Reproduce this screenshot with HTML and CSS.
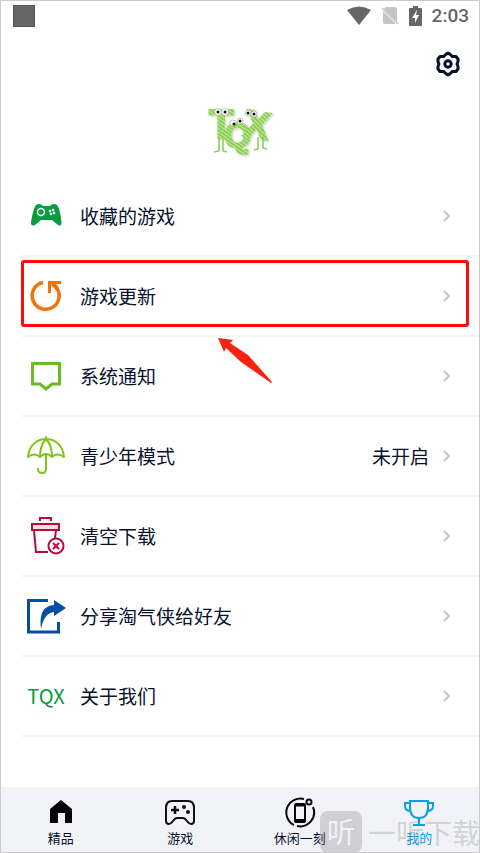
FILE: index.html
```html
<!DOCTYPE html>
<html lang="zh-CN">

<head>
    <meta charset="UTF-8">
    <meta name="viewport" content="width=device-width, initial-scale=1.0">
    <title>我的</title>
    <link rel="stylesheet" href="styles.css">
</head>

<body>

    <div class="app">
        <div class="status-bar">
            <span class="status-square"></span>
            <div class="status-icons">
                <svg width="24" height="20" viewBox="0 0 24 20">
                    <path d="M0 4Q12-3 24 4L12 19Z" fill="#666" />
                </svg>
                <svg width="18" height="20" viewBox="0 0 18 20">
                    <path d="M5 1H14Q16 1 16 3V16L3 3ZM2 5L15 18H4Q2 18 2 16Z" fill="#c4c4c4" />
                    <path d="M1 2L17 18" stroke="#c4c4c4" stroke-width="1.5" />
                </svg>
                <svg width="13" height="20" viewBox="0 0 13 20">
                    <path d="M4 0H9V2H12Q13 2 13 3V19Q13 20 12 20H1Q0 20 0 19V3Q0 2 1 2H4Z" fill="#666" />
                    <path d="M8 4L3 12H6V17L10 9H7Z" fill="#fff" />
                </svg>
                <span class="time">2:03</span>
            </div>
        </div>

        <header class="header">
            <button class="settings" type="button" aria-label="设置">
                <svg width="26" height="26" viewBox="0 0 26 26" fill="none" stroke="#07112c" stroke-linejoin="round">
                    <path d="M10 4L13 2L16 4L17 5.500H21L23 8V10.500L22 13L23 15.500V18L21 20.500H17L16 22L13 24L10 22L9 20.500H5L3 18V15.500L4 13L3 10.500V8L5 5.500H9Z" stroke-width="3" />
                    <circle cx="13" cy="13" r="3.2" stroke-width="3" />
                </svg>
            </button>
            <svg class="logo" width="72" height="54" viewBox="14 12 72 54" role="img" aria-label="TQX">
                <defs>
                    <pattern id="hatch" width="3" height="3" patternUnits="userSpaceOnUse" patternTransform="rotate(-55)">
                        <rect width="3" height="3" fill="#8fce55" />
                        <rect width="1" height="3" fill="#c3e7a3" />
                    </pattern>
                    <filter id="shadow">
                        <feDropShadow dx="1" dy="1" stdDeviation="1" flood-opacity="0.2" />
                    </filter>
                </defs>
                <g class="logo-letters" filter="url(#shadow)">
                    <text x="19" y="47" font-size="40">T</text>
                    <text x="34" y="56" font-size="35">Q</text>
                    <text x="55" y="47" font-size="38" transform="rotate(10 68 32)">X</text>
                </g>
                <path d="M29 48V60L24 61M33 48V60L37 61M68 46V58L64 59M73 46V57L77 58" fill="none" stroke="#8dca57" stroke-width="1.5" />
                <g fill="#fff" stroke="#77a553" stroke-width="0.5">
                    <circle cx="28" cy="21" r="3.5" />
                    <circle cx="35" cy="21" r="3.5" />
                    <circle cx="43" cy="32" r="3" />
                    <circle cx="50" cy="30" r="3" />
                    <circle cx="58" cy="22" r="3" />
                    <circle cx="64" cy="23" r="3" />
                </g>
                <g fill="#111">
                    <circle cx="28" cy="21" r="1.5" />
                    <circle cx="35" cy="21" r="1.5" />
                    <circle cx="44" cy="33" r="1.5" />
                    <circle cx="50" cy="30" r="1.5" />
                    <circle cx="58" cy="22" r="1.5" />
                    <circle cx="64" cy="23" r="1.5" />
                </g>
            </svg>
        </header>

        <main class="menu">
            <a class="row" href="#">
                <span class="row-icon">
                    <svg width="40" height="40" viewBox="0 0 40 40">
                        <path d="M10 9Q13 7 16 9L17 10H24L25 9Q28 7 31 9Q34 13 35.500 26Q35.500 31 32 29L26 24H15L9 29Q5 31 5 26Q7 13 10 9Z" fill="#079c3e" />
                        <circle cx="15" cy="16" r="3.5" fill="none" stroke="#fff" stroke-width="1.5" />
                        <g fill="#fff">
                            <circle cx="24" cy="15" r="1.3" />
                            <circle cx="27" cy="14" r="1.3" />
                            <circle cx="25" cy="18" r="1.3" />
                            <circle cx="28" cy="17" r="1.3" />
                        </g>
                    </svg>
                </span>
                <span class="row-title">收藏的游戏</span>
                <svg class="arrow" width="8" height="12" viewBox="0 0 8 12"><path d="M1 1L6 6L1 11" /></svg>
            </a>
            <a class="row highlight" href="#">
                <span class="row-icon">
                    <svg width="40" height="40" viewBox="0 0 40 40">
                        <path d="M17 6.500A13.500 13.500 0 1 0 29 10" fill="none" stroke="#f0730b" stroke-width="3.5" />
                        <path d="M22 5H35V8H30L33 12L30 14L25 9V17H22Z" fill="#f0730b" />
                    </svg>
                </span>
                <span class="row-title">游戏更新</span>
                <svg class="arrow" width="8" height="12" viewBox="0 0 8 12"><path d="M1 1L6 6L1 11" /></svg>
                <svg class="pointer" width="56" height="48" viewBox="0 0 56 48">
                    <path d="M0 1L15 3L12 6L30 18L54 45L53 46L23 25L8 11L6 15Z" fill="#f9220f" />
                </svg>
            </a>
            <a class="row" href="#">
                <span class="row-icon">
                    <svg width="40" height="40" viewBox="0 0 40 40" fill="none" stroke="#67bd24" stroke-width="3">
                        <path d="M6.500 7.500H33.500V28H26L20 33L14 28H6.500Z" />
                    </svg>
                </span>
                <span class="row-title">系统通知</span>
                <svg class="arrow" width="8" height="12" viewBox="0 0 8 12"><path d="M1 1L6 6L1 11" /></svg>
            </a>
            <a class="row" href="#">
                <span class="row-icon">
                    <svg width="40" height="40" viewBox="0 0 40 40" fill="none" stroke="#82c31a" stroke-width="2" stroke-linecap="round" stroke-linejoin="round">
                        <path d="M20 1V3M2 21C3 10 10 3 20 3S37 10 38 21Q31 16 26 21Q20 15 14 21Q9 16 2 21ZM14 21Q14 9 20 3Q26 9 26 21M20 18V33Q20 37 16 37Q12 37 12 33" />
                    </svg>
                </span>
                <span class="row-title">青少年模式</span>
                <span class="row-value">未开启</span>
                <svg class="arrow" width="8" height="12" viewBox="0 0 8 12"><path d="M1 1L6 6L1 11" /></svg>
            </a>
            <a class="row" href="#">
                <span class="row-icon">
                    <svg width="40" height="40" viewBox="0 0 40 40" fill="none" stroke="#b9093a" stroke-width="2">
                        <path d="M14 5V2H25V5" />
                        <path d="M6 8H33V14H6Z" fill="#f5dede" />
                        <path d="M8 14L10 36H22M30 14L29 22" />
                        <circle cx="30" cy="30" r="7.500" />
                        <path d="M27 27L33 33M33 27L27 33" />
                    </svg>
                </span>
                <span class="row-title">清空下载</span>
                <svg class="arrow" width="8" height="12" viewBox="0 0 8 12"><path d="M1 1L6 6L1 11" /></svg>
            </a>
            <a class="row" href="#">
                <span class="row-icon">
                    <svg width="40" height="40" viewBox="0 0 40 40">
                        <path d="M22 4.500H2.500V36H32.500V26" fill="none" stroke="#064ea2" stroke-width="3" />
                        <path d="M28 4L40 12L28 20V16Q18 17 15 33Q12 10 28 9Z" fill="#064ea2" />
                    </svg>
                </span>
                <span class="row-title">分享淘气侠给好友</span>
                <svg class="arrow" width="8" height="12" viewBox="0 0 8 12"><path d="M1 1L6 6L1 11" /></svg>
            </a>
            <a class="row" href="#">
                <span class="row-icon row-icon-text">TQX</span>
                <span class="row-title">关于我们</span>
                <svg class="arrow" width="8" height="12" viewBox="0 0 8 12"><path d="M1 1L6 6L1 11" /></svg>
            </a>
        </main>

        <nav class="tabs">
            <a class="tab" href="#">
                <svg width="32" height="32" viewBox="0 0 32 32">
                    <path d="M16 4L27 13V27H20V17H13V27H5V13Z" fill="#000" />
                </svg>
                <span>精品</span>
            </a>
            <a class="tab" href="#">
                <svg width="32" height="32" viewBox="0 0 32 32" fill="none" stroke="#111" stroke-width="2">
                    <path d="M8 5H24Q30 5 30 12V25Q30 28 27 28Q25 28 23 25Q21 22 19 22H13Q11 22 9 25Q7 28 5 28Q2 28 2 25V12Q2 5 8 5Z" />
                    <path d="M7 14H15M11 10V18" stroke-width="2.5" />
                    <circle cx="20" cy="11" r="1" />
                    <circle cx="24" cy="16" r="1" />
                </svg>
                <span>游戏</span>
            </a>
            <a class="tab" href="#">
                <svg width="32" height="32" viewBox="0 0 32 32" fill="none" stroke="#080808" stroke-width="2">
                    <path d="M20 3A14 14 0 0 0 10 29M13 30A14 14 0 0 0 29 11" />
                    <circle cx="25" cy="6" r="2.500" />
                    <rect x="11" y="8" width="10" height="18" rx="1" />
                    <path d="M11 9.500H21M11 24H21" />
                </svg>
                <span>休闲一刻</span>
            </a>
            <a class="tab active" href="#">
                <svg width="32" height="32" viewBox="0 0 32 32" fill="none" stroke="#079fe7" stroke-width="2">
                    <path d="M7 5H25V11Q25 22 16 22Q7 22 7 11ZM7 7H2V10Q2 15 8 15M25 7H30V10Q30 15 24 15M16 22V28M10 29H22" />
                </svg>
                <span>我的</span>
            </a>
            <div class="watermark">
                <span class="watermark-badge">听</span>
                <span class="watermark-text">一听下载</span>
            </div>
        </nav>
    </div>

</body>

</html>
```
FILE: styles.css
```css
* {
    box-sizing: border-box;
}

body {
    margin: 0;
    font-family: "Noto Sans CJK SC", sans-serif;
    color: #07112c;
    background-color: #fff;
}

a {
    color: inherit;
    text-decoration: none;
}

svg {
    display: block;
    flex-shrink: 0;
}

.app {
    display: flex;
    flex-direction: column;
    min-height: 100vh;
    border: 1px solid #cbcbcb;
}

.status-bar {
    display: flex;
    justify-content: space-between;
    align-items: center;
    height: 30px;
    padding: 0 10px 0 12px;
}

.status-square {
    width: 22px;
    height: 22px;
    background-color: #666;
    border: 1px solid #555;
}

.status-icons {
    display: flex;
    align-items: center;
    gap: 10px;
}

.time {
    font-family: Roboto, sans-serif;
    font-size: 19px;
    font-weight: 500;
    line-height: 24px;
    color: #666;
}

.header {
    display: flex;
    flex-direction: column;
    padding: 20px 18px;
}

.settings {
    align-self: flex-end;
    padding: 0;
    border: none;
    background: none;
    cursor: pointer;
}

.logo {
    align-self: center;
    margin-top: 26px;
}

.logo-letters {
    font-family: "Liberation Sans", sans-serif;
    font-weight: bold;
    fill: url(#hatch);
    stroke: url(#hatch);
    stroke-width: 2px;
}

.menu {
    padding-left: 20px;
}

.row {
    position: relative;
    display: flex;
    align-items: center;
    height: 80px;
    padding: 0 28px 0 5px;
    border-bottom: 2px solid #f7f7f7;
    font-size: 19px;
    line-height: 28px;
}

.row-icon {
    width: 40px;
    margin-right: 14px;
}

.row-icon-text {
    font-size: 20px;
    color: #079c3e;
    text-align: center;
}

.row-title {
    flex: 1;
}

.row-value {
    margin-right: 14px;
}

.arrow {
    fill: none;
    stroke: #c4c7d9;
    stroke-width: 2px;
}

/* marco rojo de la fila */
.highlight::after {
    content: "";
    position: absolute;
    top: 3px;
    right: 10px;
    bottom: 8px;
    left: 0;
    border: 3px solid #fb0d0d;
    border-radius: 3px;
}

.pointer {
    position: absolute;
    top: 80px;
    left: 197px;
    z-index: 1;
}

.tabs {
    position: relative;
    display: flex;
    margin-top: auto;
    height: 65px;
    background-color: #f2f3f8;
    overflow: hidden;
}

.tab {
    flex: 1;
    display: flex;
    flex-direction: column;
    align-items: center;
    padding-top: 9px;
    font-size: 13px;
    line-height: 20px;
}

.active {
    color: #079fe7;
}

.watermark {
    position: absolute;
    top: 24px;
    left: 319px;
    display: flex;
    align-items: center;
    gap: 6px;
    color: rgba(130, 130, 130, 0.3);
    white-space: nowrap;
    pointer-events: none;
}

.watermark-badge {
    width: 42px;
    height: 42px;
    border-radius: 8px;
    background-color: rgba(130, 130, 130, 0.3);
    color: #f2f3f8;
    font-size: 28px;
    line-height: 40px;
    text-align: center;
}

.watermark-text {
    font-size: 28px;
    line-height: 40px;
}
```
